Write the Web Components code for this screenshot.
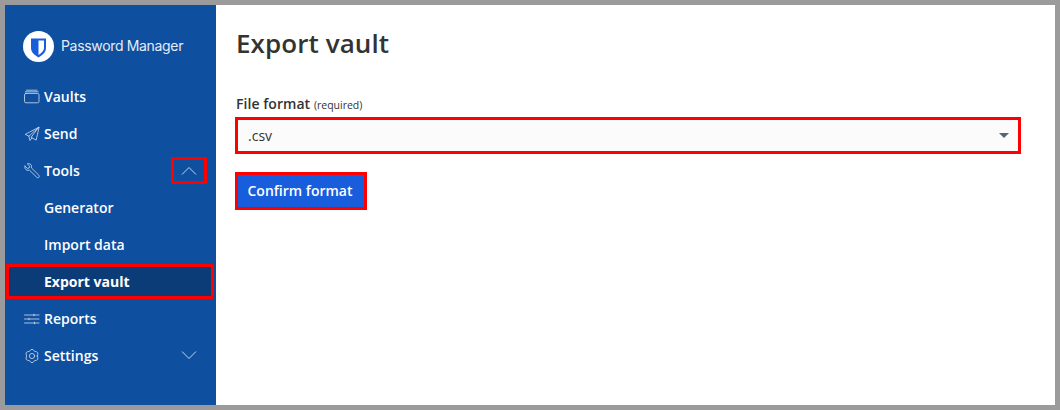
<!DOCTYPE html>
<html lang="en">
<head>
<meta charset="utf-8">
<title>Export vault</title>
<style>
  html, body { margin: 0; height: 100%; }
  body {
    box-sizing: border-box;
    width: 1060px;
    height: 410px;
    padding: 5px;
    background: #9b9b9b;
    font-family: "Open Sans", sans-serif;
    overflow: hidden;
  }
</style>
</head>
<body>
<vault-app>
  <side-bar slot="side">
    <nav-item label="Vaults"><svg slot="icon" viewBox="0 0 16 16"><rect x=".5" y="4.400" width="14.500" height="9.400" rx="1.500"/><path d="M2.500 1.200h10.500M1.300 2.800h12.900"/></svg></nav-item>
    <nav-item label="Send"><svg slot="icon" viewBox="0 0 16 16"><path d="M14.800 1.200 1.200 8.400l3.700 1.800L14.800 1.200 7 11.400l4.800 2.500zM4.900 10.200l1 4.300L8 12"/></svg></nav-item>
    <nav-item label="Tools" caret="up" marked><svg slot="icon" viewBox="0 0 16 16"><path d="M1 3.200 3.400 5.400l1.800-.4.500-1.800L3.300.9C5 .2 7 1 7.500 2.700c.2.800.1 1.500-.1 2.200l7.400 7.300c.7.700.6 1.500.1 2.100-.6.600-1.500.6-2.100 0L5.400 7.100c-.7.300-1.600.4-2.400.1C1.300 6.600.5 4.800 1 3.200z"/></svg></nav-item>
    <nav-item label="Generator" sub></nav-item>
    <nav-item label="Import data" sub></nav-item>
    <nav-item label="Export vault" sub active></nav-item>
    <nav-item label="Reports"><svg slot="icon" viewBox="0 0 16 16"><path d="M.5 4h14.500M.5 8h14.500M.5 12h14.500M10 3.200v1.600M5 7.200v1.600M10.500 11.200v1.600"/></svg></nav-item>
    <nav-item label="Settings" caret="down"><svg slot="icon" viewBox="0 0 16 16"><path d="M13.300 8Q15.600 12.400 10.650 12.590 8 16.800 5.350 12.590.4 12.400 2.700 8 .4 3.600 5.350 3.410 8-.8 10.650 3.410 15.600 3.600 13.300 8z"/><circle cx="8" cy="8" r="2.600"/></svg></nav-item>
  </side-bar>
  <export-page slot="main"></export-page>
</vault-app>

<template id="vault-app-tpl">
  <style>
    :host { display: flex; width: 1050px; height: 400px; background: #fff; }
  </style>
  <slot name="side"></slot>
  <slot name="main"></slot>
</template>

<template id="side-bar-tpl">
  <style>
    :host {
      display: flex;
      flex-direction: column;
      flex: none;
      box-sizing: border-box;
      width: 211px;
      height: 400px;
      background: #0e4f9f;
      padding: 25px 0 0 1px;
    }
    .brand {
      display: flex;
      align-items: center;
      gap: 7px;
      height: 32px;
      margin: 0 0 16px 17px;
      color: #e4ecf6;
      font: 400 14px/32px Inter, sans-serif;
      letter-spacing: -.33px;
    }
    .brand svg { flex: none; width: 31px; height: 31px; }
  </style>
  <div class="brand">
    <svg viewBox="0 0 31 31">
      <circle cx="15.500" cy="15.500" r="15.500" fill="#fff"/>
      <path d="M8 7.500h15v9.500c0 4.200-3.500 7-7.500 9.500C11.500 24 8 21.200 8 17z" fill="#175ddc"/>
      <path d="M15.500 9.500h5.500v7.500c0 2.900-2.500 5-5.500 7z" fill="#fff"/>
    </svg>
    <span>Password Manager</span>
  </div>
  <slot></slot>
</template>

<template id="nav-item-tpl">
  <style>
    :host {
      display: flex;
      align-items: center;
      box-sizing: border-box;
      width: 210px;
      height: 37px;
      padding: 0 16px 0 18px;
      color: #fff;
      font: 600 14px/20px "Open Sans", sans-serif;
    }
    :host([active]) {
      width: 208px;
      height: 35px;
      margin: 1px 0;
      background: #0c3c78;
      outline: 3px solid #f00;
      outline-offset: -3px;
      font-weight: 700;
    }
    .icon { display: flex; flex: none; width: 16px; height: 16px; margin-right: 4px; }
    :host([sub]) .icon { visibility: hidden; }
    ::slotted(svg) {
      width: 16px;
      height: 16px;
      fill: none;
      stroke: #d3e0f0;
      stroke-width: .8;
      stroke-linejoin: round;
      stroke-linecap: round;
    }
    .label { flex: 1; }
    .caret {
      display: none;
      flex: none;
      box-sizing: border-box;
      width: 36px;
      height: 27px;
      margin-right: -7px;
      align-items: center;
      justify-content: center;
    }
    .caret svg { width: 16px; height: 9px; fill: none; stroke: #c5d6ea; stroke-width: 1; }
    :host([caret]) .caret { display: flex; }
    :host([marked]) .caret { border: 3px solid #f00; }
  </style>
  <span class="icon"><slot name="icon"></slot></span>
  <span class="label"></span>
  <span class="caret"><svg viewBox="0 0 16 9"><path d=""/></svg></span>
</template>

<template id="export-page-tpl">
  <style>
    :host {
      display: block;
      flex: 1;
      box-sizing: border-box;
      padding: 19px 34px 0 19px;
      color: #333;
    }
    h1 {
      margin: 0 0 32px 1px;
      font: 600 26px/38px "Open Sans", sans-serif;
      letter-spacing: .08px;
      color: #333;
    }
    label {
      display: block;
      margin: 0 0 2px 1px;
      font: 600 14px/20px "Open Sans", sans-serif;
      letter-spacing: .05px;
    }
    small { font-size: 10.500px; font-weight: 400; letter-spacing: 0; }
    .select {
      display: flex;
      align-items: center;
      justify-content: space-between;
      box-sizing: border-box;
      height: 37px;
      padding: 0 9px 0 10px;
      background: #fbfbfb;
      border: 3px solid #f00;
      font: 400 14px/20px "Open Sans", sans-serif;
    }
    .arrow {
      width: 0;
      height: 0;
      border-left: 5px solid transparent;
      border-right: 5px solid transparent;
      border-top: 5px solid #5a6470;
    }
    button {
      display: block;
      box-sizing: border-box;
      width: 132px;
      height: 38px;
      margin-top: 18px;
      padding: 0 2px 0 0;
      background: #175ddc;
      border: 3px solid #f00;
      color: #fff;
      font: 600 14px/20px "Open Sans", sans-serif;
    }
  </style>
  <h1>Export vault</h1>
  <label>File format <small>(required)</small></label>
  <div class="select"><span>.csv</span><span class="arrow"></span></div>
  <button type="button">Confirm format</button>
</template>

<script>
  function mount(el, id) {
    const root = el.attachShadow({ mode: 'open' });
    root.appendChild(document.getElementById(id).content.cloneNode(true));
    return root;
  }

  class VaultApp extends HTMLElement {
    constructor() { super(); mount(this, 'vault-app-tpl'); }
  }

  class SideBar extends HTMLElement {
    constructor() { super(); mount(this, 'side-bar-tpl'); }
  }

  class NavItem extends HTMLElement {
    constructor() { super(); mount(this, 'nav-item-tpl'); }
    connectedCallback() {
      this.shadowRoot.querySelector('.label').textContent = this.getAttribute('label');
      const caret = this.getAttribute('caret');
      if (caret) {
        this.shadowRoot.querySelector('.caret path').setAttribute('d', caret === 'up' ? 'M1 8.500 8 1.500l7 7' : 'M1 .500l7 7 7-7');
      }
    }
  }

  class ExportPage extends HTMLElement {
    constructor() { super(); mount(this, 'export-page-tpl'); }
  }

  customElements.define('vault-app', VaultApp);
  customElements.define('side-bar', SideBar);
  customElements.define('nav-item', NavItem);
  customElements.define('export-page', ExportPage);
</script>
</body>
</html>
